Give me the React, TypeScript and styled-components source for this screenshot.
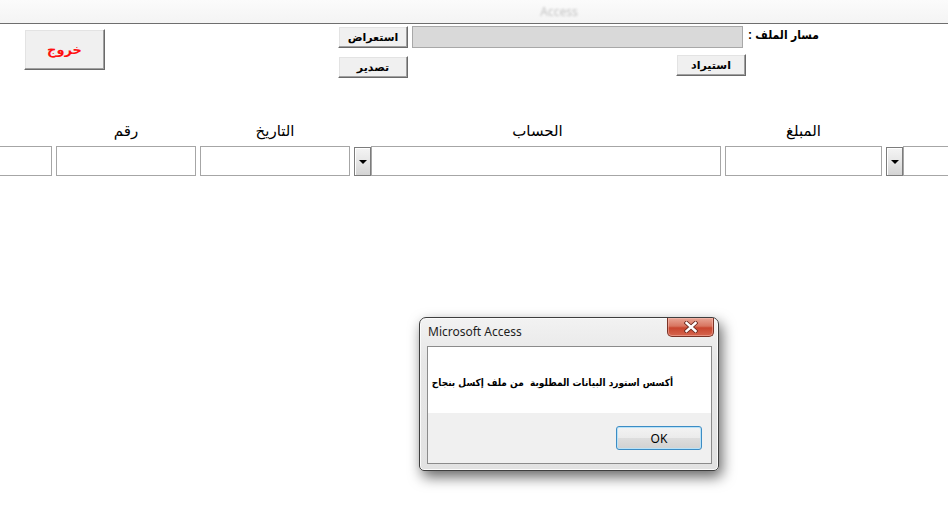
import React from "react";
import styled, { createGlobalStyle } from "styled-components";

const Global = createGlobalStyle`
  html, body { margin: 0; padding: 0; background: #ffffff; }
  body { font-family: "Liberation Sans", "DejaVu Sans", Arial, sans-serif; }
  * { box-sizing: border-box; }
`;

const arabic = `"Liberation Sans", "DejaVu Sans", sans-serif`;
const arabicNarrow = `"Liberation Sans", "DejaVu Sans Condensed", "DejaVu Sans", sans-serif`;
const ui = `"Noto Sans", "Open Sans", "DejaVu Sans", sans-serif`;

const Window = styled.div`
  position: relative;
  width: 948px;
  height: 506px;
  overflow: hidden;
  background: #ffffff;
`;

const TitleBar = styled.div`
  height: 24px;
  background: linear-gradient(#fbfbfb, #f4f4f4);
  border-bottom: 1px solid #6e6e6e;
  display: flex;
  align-items: center;
  justify-content: center;
  padding-left: 170px;
`;

const TitleText = styled.span`
  font-family: ${ui};
  font-size: 12px;
  color: #c4c4c4;
  filter: blur(1.2px);
`;

const Form = styled.div`
  display: flex;
  flex-direction: column;
`;

const TopArea = styled.div`
  height: 96px;
  display: flex;
  align-items: flex-start;
  padding-top: 2px;
`;

const FormButton = styled.button<{ $w: number; $h: number; $danger?: boolean }>`
  width: ${(p) => p.$w}px;
  height: ${(p) => p.$h}px;
  padding: 0;
  margin: 0;
  background: #f0f0f0;
  border: 1px solid;
  border-color: #ffffff #6a6a6a #6a6a6a #ffffff;
  box-shadow: inset -1px -1px 0 #a0a0a0, inset 1px 1px 0 #e3e3e3;
  font-family: ${arabic};
  font-weight: bold;
  font-size: ${(p) => (p.$danger ? 13 : 11)}px;
  color: ${(p) => (p.$danger ? "#ff1010" : "#000000")};
  display: flex;
  align-items: center;
  justify-content: center;
`;

const ExitWrap = styled.div`
  margin-left: 24px;
  margin-top: 3px;
`;

const ButtonStack = styled.div`
  margin-left: 233px;
  display: flex;
  flex-direction: column;
  gap: 8px;
`;

const PathColumn = styled.div`
  margin-left: 4px;
  width: 334px;
  display: flex;
  flex-direction: column;
  gap: 6px;
`;

const PathBox = styled.div`
  width: 331px;
  height: 22px;
  background: #d9d9d9;
  border: 1px solid #a8a8a8;
`;

const ImportRow = styled.div`
  display: flex;
  justify-content: flex-end;
`;

const PathLabel = styled.div`
  margin-left: 2px;
  margin-top: 2px;
  font-family: ${arabicNarrow};
  font-weight: bold;
  font-size: 12px;
  color: #000;
  direction: rtl;
  white-space: nowrap;
`;

const FieldRow = styled.div`
  display: flex;
  gap: 4px;
  margin-left: -87px;
`;

const Field = styled.div<{ $w: number }>`
  flex: none;
  width: ${(p) => p.$w}px;
  display: flex;
  flex-direction: column;
  gap: 4px;
`;

const FieldLabel = styled.div`
  height: 22px;
  line-height: 22px;
  text-align: center;
  font-family: ${arabic};
  font-size: 15px;
  color: #000;
  direction: rtl;
`;

const TextBox = styled.div`
  flex: 1;
  height: 30px;
  background: #fff;
  border: 1px solid #a6a6a6;
`;

const Combo = styled.div`
  display: flex;
  height: 30px;
`;

const DropButton = styled.div`
  flex: none;
  width: 17px;
  height: 29px;
  margin-top: 1px;
  border: 1px solid #7c7c7c;
  background: linear-gradient(#f4f4f4, #e6e6e6 50%, #d4d4d4);
  box-shadow: inset 1px 1px 0 #ffffff;
  display: flex;
  align-items: center;
  justify-content: center;
  &::after {
    content: "";
    border-left: 4px solid transparent;
    border-right: 4px solid transparent;
    border-top: 4px solid #000;
  }
`;

/* Dialog */
const Dialog = styled.div`
  position: absolute;
  left: 419px;
  top: 317px;
  width: 300px;
  height: 154px;
  border: 1px solid #3e3e3e;
  border-radius: 7px 7px 5px 5px;
  background: linear-gradient(#f2f2f2, #e6e6e6 30%, #e2e2e2);
  box-shadow: 3px 6px 14px rgba(0, 0, 0, 0.6), inset 0 0 0 1px #fbfbfb;
  display: flex;
  flex-direction: column;
`;

const DialogTitle = styled.div`
  height: 28px;
  display: flex;
  align-items: flex-start;
  justify-content: space-between;
  padding: 0 4px 0 8px;
`;

const DialogTitleText = styled.span`
  margin-top: 5px;
  font-family: ${ui};
  font-size: 12px;
  color: #1e1e1e;
`;

const CloseButton = styled.div`
  width: 47px;
  height: 19px;
  border: 1px solid #7a3326;
  border-top: none;
  border-radius: 0 0 5px 5px;
  background: linear-gradient(#e9a595, #d87560 45%, #c8452e 55%, #d5664f);
  box-shadow: inset 0 0 0 1px rgba(255, 200, 190, 0.45);
  display: flex;
  align-items: center;
  justify-content: center;
`;

const Client = styled.div`
  margin: 0 6px 6px 7px;
  flex: 1;
  border: 1px solid #8b8b8b;
  display: flex;
  flex-direction: column;
`;

const MessageArea = styled.div`
  height: 66px;
  background: #ffffff;
  display: flex;
  align-items: center;
  justify-content: flex-start;
  direction: rtl;
  padding: 4px 38px 0 0;
`;

const MessageText = styled.span`
  font-family: "DejaVu Sans Condensed", "DejaVu Sans", sans-serif;
  font-stretch: condensed;
  font-weight: bold;
  font-size: 10px;
  color: #000;
  white-space: pre;
`;

const ButtonArea = styled.div`
  flex: 1;
  background: #f0f0f0;
  display: flex;
  justify-content: flex-end;
  align-items: flex-start;
  padding: 13px 9px 0 0;
`;

const OkButton = styled.button`
  width: 86px;
  height: 24px;
  padding: 0;
  border: 1px solid #3c8cc4;
  border-radius: 3px;
  background: linear-gradient(#f3f3f3, #ebebeb 48%, #dddddd 52%, #d1d1d1);
  box-shadow: inset 0 0 0 1px #b8e2f8;
  font-family: ${ui};
  font-size: 12px;
  color: #000;
`;

const CloseIcon = () => (
  <svg width="14" height="12" viewBox="0 0 14 12">
    <path d="M2.5 2 L11.5 10 M11.5 2 L2.5 10" stroke="#6a2a20" strokeWidth="4.2" strokeLinecap="square" />
    <path d="M2.5 2 L11.5 10 M11.5 2 L2.5 10" stroke="#ffffff" strokeWidth="2.4" strokeLinecap="square" />
  </svg>
);

export default function App() {
  return (
    <>
      <Global />
      <Window>
        <TitleBar>
          <TitleText>Access</TitleText>
        </TitleBar>
        <Form>
          <TopArea>
            <ExitWrap>
              <FormButton $w={81} $h={41} $danger dir="rtl">
                خروج
              </FormButton>
            </ExitWrap>
            <ButtonStack>
              <FormButton $w={70} $h={22} dir="rtl">
                استعراض
              </FormButton>
              <FormButton $w={70} $h={22} dir="rtl">
                تصدير
              </FormButton>
            </ButtonStack>
            <PathColumn>
              <PathBox />
              <ImportRow>
                <FormButton $w={70} $h={22} dir="rtl">
                  استيراد
                </FormButton>
              </ImportRow>
            </PathColumn>
            <PathLabel>مسار الملف :</PathLabel>
          </TopArea>
          <FieldRow>
            <Field $w={139}>
              <FieldLabel />
              <TextBox />
            </Field>
            <Field $w={140}>
              <FieldLabel>رقم</FieldLabel>
              <TextBox />
            </Field>
            <Field $w={150}>
              <FieldLabel>التاريخ</FieldLabel>
              <TextBox />
            </Field>
            <Field $w={367}>
              <FieldLabel>الحساب</FieldLabel>
              <Combo>
                <DropButton />
                <TextBox />
              </Combo>
            </Field>
            <Field $w={157}>
              <FieldLabel>المبلغ</FieldLabel>
              <TextBox />
            </Field>
            <Field $w={120}>
              <FieldLabel />
              <Combo>
                <DropButton />
                <TextBox />
              </Combo>
            </Field>
          </FieldRow>
        </Form>
        <Dialog>
          <DialogTitle>
            <DialogTitleText>Microsoft Access</DialogTitleText>
            <CloseButton>
              <CloseIcon />
            </CloseButton>
          </DialogTitle>
          <Client>
            <MessageArea>
              <MessageText>أكسس استورد البيانات المطلوبة  من ملف إكسل بنجاح</MessageText>
            </MessageArea>
            <ButtonArea>
              <OkButton>OK</OkButton>
            </ButtonArea>
          </Client>
        </Dialog>
      </Window>
    </>
  );
}
